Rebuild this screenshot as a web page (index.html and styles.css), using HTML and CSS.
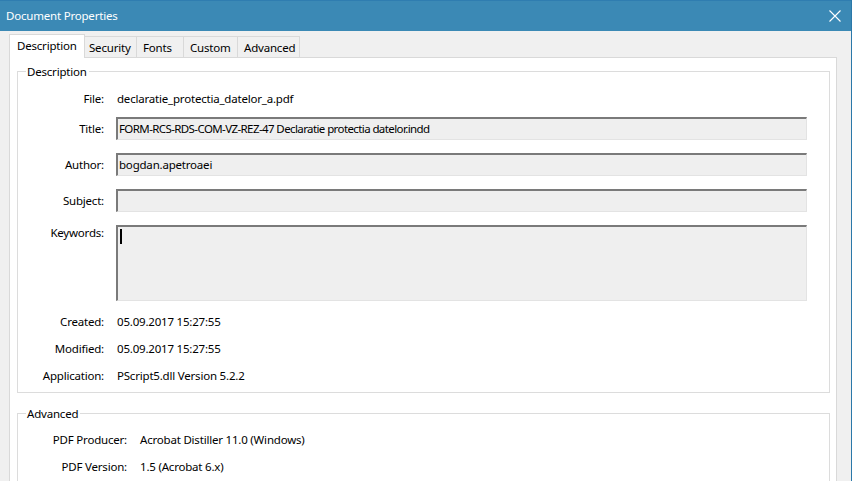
FILE: index.html
```html
<!DOCTYPE html>
<html>
<head>
<meta charset="utf-8">
<link rel="stylesheet" href="styles.css">
</head>
<body>
<div class="window">
  <div class="titlebar">
    <span class="title">Document Properties</span>
    <svg class="close" width="12" height="12" viewBox="0 0 12 12"><path d="M0.5 0.5 L11.5 11.5 M11.5 0.5 L0.5 11.5" stroke="#fff" stroke-width="1.1" fill="none"/></svg>
  </div>
  <div class="client">
    <div class="tabs">
      <div class="tab active t-desc">Description</div>
      <div class="tab t-sec">Security</div>
      <div class="tab t-fonts">Fonts</div>
      <div class="tab t-custom">Custom</div>
      <div class="tab t-adv">Advanced</div>
    </div>
    <div class="panel">
      <fieldset class="group group-desc">
        <legend>Description</legend>
        <div class="row r-file"><span class="lbl">File:</span><span class="val">declaratie_protectia_datelor_a.pdf</span></div>
        <div class="row r-title"><span class="lbl">Title:</span><div class="field caps">FORM-RCS-RDS-COM-VZ-REZ-47 Declaratie protectia datelor.indd</div></div>
        <div class="row r-gap"><span class="lbl">Author:</span><div class="field">bogdan.apetroaei</div></div>
        <div class="row r-gap"><span class="lbl">Subject:</span><div class="field"></div></div>
        <div class="row r-gap r-kw"><span class="lbl">Keywords:</span><div class="field area"><span class="caret"></span></div></div>
        <div class="row r-created"><span class="lbl">Created:</span><span class="val">05.09.2017 15:27:55</span></div>
        <div class="row r-small"><span class="lbl">Modified:</span><span class="val">05.09.2017 15:27:55</span></div>
        <div class="row r-small"><span class="lbl">Application:</span><span class="val">PScript5.dll Version 5.2.2</span></div>
      </fieldset>
      <fieldset class="group group-adv">
        <legend>Advanced</legend>
        <div class="row r-prod"><span class="lbl">PDF Producer:</span><span class="val">Acrobat Distiller 11.0 (Windows)</span></div>
        <div class="row r-small"><span class="lbl">PDF Version:</span><span class="val">1.5 (Acrobat 6.x)</span></div>
      </fieldset>
    </div>
  </div>
</div>
</body>
</html>
```

FILE: styles.css
```css
html, body {
  margin: 0;
  padding: 0;
}
body {
  font-family: "Noto Sans", "Open Sans", sans-serif;
  font-size: 11.5px;
  letter-spacing: -0.2px;
  color: #000;
  background: #f0f0f0;
}
.window {
  width: 852px;
  height: 481px;
  overflow: hidden;
  box-sizing: border-box;
  border-right: 1px solid #2b78a9;
  background: #f0f0f0;
  display: flex;
  flex-direction: column;
}
.titlebar {
  height: 31px;
  flex: none;
  background: #3b89b5;
  border-top: 1px solid #2f7db0;
  box-sizing: border-box;
  display: flex;
  align-items: center;
  justify-content: space-between;
  padding: 0 10px 0 6px;
}
.title {
  color: #fff;
  margin-top: -1px;
}
.close {
  display: block;
  margin-top: -1px;
}
.client {
  flex: 1;
  padding: 4px 14px 0 9px;
  display: flex;
  flex-direction: column;
}
.tabs {
  display: flex;
  align-items: flex-end;
  height: 23px;
  position: relative;
  z-index: 1;
  margin-bottom: -1px;
}
.tab {
  box-sizing: border-box;
  height: 21px;
  border: 1px solid #d9d9d9;
  border-bottom: none;
  border-left: none;
  background: #f0f0f0;
  padding-left: 4px;
  line-height: 21px;
  margin-bottom: 1px;
}
.tab.active {
  height: 24px;
  border-left: 1px solid #d9d9d9;
  background: #fff;
  padding-left: 7px;
  line-height: 21px;
  margin-bottom: 0;
}
.t-desc { width: 76px; }
.t-sec { width: 52px; }
.t-fonts { width: 47px; padding-left: 6px; }
.t-custom { width: 54px; padding-left: 6px; }
.t-adv { width: 62px; padding-left: 6px; }
.panel {
  flex: 1;
  background: #fff;
  border: 1px solid #d9d9d9;
  padding: 6px 6px 0 7px;
}
.group {
  margin: 0;
  border: 1px solid #dcdcdc;
  padding: 0 20px 6px 0;
}
.group legend {
  margin-left: 8px;
  padding: 0 2px 0 1px;
  line-height: 15px;
}
.group-adv {
  margin-top: 13px;
  padding-bottom: 40px;
}
.row {
  display: flex;
  align-items: center;
}
.lbl {
  flex: none;
  width: 86px;
  text-align: right;
  margin-right: 12px;
  line-height: 20px;
}
.val {
  padding-left: 1px;
  line-height: 20px;
}
.field {
  flex: none;
  width: 691px;
  height: 23px;
  box-sizing: border-box;
  background: #efefef;
  border-style: solid;
  border-width: 2px 1px 1px 2px;
  border-color: #7a7a7a #e3e3e3 #e3e3e3 #7a7a7a;
  padding-left: 1px;
  line-height: 19px;
}
.field.caps {
  letter-spacing: -0.6px;
}
.area {
  height: 76px;
  padding-top: 2px;
}
.caret {
  display: block;
  width: 2px;
  height: 15px;
  background: #000;
  margin-left: 1px;
}
.r-file { margin-top: 10px; }
.r-title { margin-top: 8px; }
.r-gap { margin-top: 13px; }
.r-kw { align-items: flex-start; }
.r-kw .lbl { margin-top: -2px; }
.r-created { margin-top: 11px; }
.r-small { margin-top: 7px; }
.group-adv .lbl { width: 109px; }
.r-prod { margin-top: 9px; }
```
